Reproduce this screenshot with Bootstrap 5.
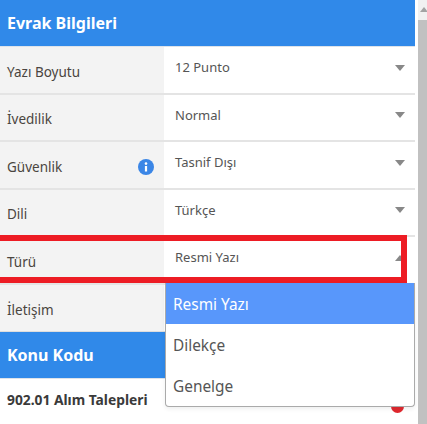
<!DOCTYPE html>
<html lang="tr"><head><meta charset="utf-8">
<link href="https://cdn.jsdelivr.net/npm/bootstrap@5.3.0/dist/css/bootstrap.min.css" rel="stylesheet">
<style>
html,body{height:424px;overflow:hidden;background:#fff}
body{font-family:"Noto Sans",sans-serif;color:#444;position:relative}
.panel-wrap{width:415px}
.head-bar{height:47px;background:#3089e9;color:#fff;font-weight:700;font-size:16px;padding-left:7px;border-bottom:1px solid #dde3ea}
.form-line{height:47.5px;border-bottom:2px solid #e4e4e4}
.form-line.last-line{border-bottom:1px solid #ddd}
.lbl{width:164px;background:#f3f3f3;padding:4px 10px 0 7px;font-size:13.5px;color:#4a4540}
.val{padding:0 10px 4px 11px;font-size:13px;background:#fff;color:#555}
.caret-d{width:0;height:0;border-left:5px solid transparent;border-right:5px solid transparent;border-top:6.5px solid #888}
.caret-u{width:0;height:0;border-left:5px solid transparent;border-right:5px solid transparent;border-bottom:6.5px solid #888}
.info-dot{width:16px;height:16px}
.code-row{font-size:13.8px;font-weight:700;color:#3a3a3a;padding:11px 7px}
.scroll-track{position:absolute;left:418px;top:0;width:9px;height:424px;background:#f1f1f1}
.scroll-thumb{position:absolute;left:0;top:20px;width:9px;height:404px;background:#c1c1c1}
.scroll-up{position:absolute;left:2px;top:7px;width:0;height:0;border-left:4px solid transparent;border-right:4px solid transparent;border-bottom:5px solid #a3a3a3}
.red-frame{position:absolute;left:-7px;top:235px;width:414px;height:48px;border:6px solid #ed1c24}
.drop-menu{position:absolute;left:165px;top:283px;width:250px;height:124px;background:#fff;border:1px solid #aaa;border-top:0;border-radius:0 0 4px 4px;font-size:15.4px;color:#555}
.drop-opt{height:41px;padding:1px 0 0 7px;line-height:41px}
.drop-opt.on{background:#5897fb;color:#fff}
.red-dot{position:absolute;left:391px;top:400px;width:13px;height:13px;border-radius:50%;background:#e0282e}
</style></head><body>
<div class="panel-wrap">
  <div class="head-bar d-flex align-items-center">Evrak Bilgileri</div>
  <div class="form-line d-flex"><div class="lbl d-flex align-items-center">Yazı Boyutu</div><div class="val flex-grow-1 d-flex align-items-center justify-content-between"><span>12 Punto</span><span class="caret-d"></span></div></div>
  <div class="form-line d-flex"><div class="lbl d-flex align-items-center">İvedilik</div><div class="val flex-grow-1 d-flex align-items-center justify-content-between"><span>Normal</span><span class="caret-d"></span></div></div>
  <div class="form-line d-flex"><div class="lbl d-flex align-items-center justify-content-between"><span>Güvenlik</span><svg class="info-dot" viewBox="0 0 16 16"><circle cx="8" cy="8" r="8" fill="#3b86e6"/><rect x="6.9" y="7" width="2.2" height="5.5" fill="#fff"/><circle cx="8" cy="4.6" r="1.3" fill="#fff"/></svg></div><div class="val flex-grow-1 d-flex align-items-center justify-content-between"><span>Tasnif Dışı</span><span class="caret-d"></span></div></div>
  <div class="form-line d-flex"><div class="lbl d-flex align-items-center">Dili</div><div class="val flex-grow-1 d-flex align-items-center justify-content-between"><span>Türkçe</span><span class="caret-d"></span></div></div>
  <div class="form-line d-flex"><div class="lbl d-flex align-items-center">Türü</div><div class="val flex-grow-1 d-flex align-items-center justify-content-between"><span>Resmi Yazı</span><span class="caret-u"></span></div></div>
  <div class="form-line last-line d-flex"><div class="lbl d-flex align-items-center">İletişim</div><div class="val flex-grow-1"></div></div>
  <div class="head-bar d-flex align-items-center">Konu Kodu</div>
  <div class="code-row">902.01 Alım Talepleri</div>
</div>
<div class="red-dot"></div>
<div class="red-frame"></div>
<div class="drop-menu shadow-sm">
  <div class="drop-opt on">Resmi Yazı</div>
  <div class="drop-opt">Dilekçe</div>
  <div class="drop-opt">Genelge</div>
</div>
<div class="scroll-track"><div class="scroll-up"></div><div class="scroll-thumb"></div></div>
<script src="https://cdn.jsdelivr.net/npm/bootstrap@5.3.0/dist/js/bootstrap.bundle.min.js"></script>
</body></html>
